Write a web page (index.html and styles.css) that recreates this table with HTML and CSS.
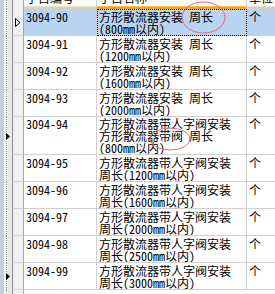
FILE: index.html
```html
<!DOCTYPE html>
<html>
<head>
<meta charset="utf-8">
<link rel="stylesheet" href="styles.css">
</head>
<body>
<div class="grid">
  <div class="row head">
    <div class="strip"></div>
    <div class="rh"></div>
    <div class="c c1 hd"><span class="ht">子目编号</span></div>
    <div class="c c2 hd hot"><span class="ht">子目名称</span></div>
    <div class="c c3 hd"><span class="ht">单位</span></div>
  </div>
  <div class="row sel">
    <div class="strip"></div>
    <div class="rh"><svg class="cur" width="6" height="9" viewBox="0 0 6 9"><polygon points="0.5,0.5 5,4.5 0.5,8.5" fill="none" stroke="#000" stroke-width="1"/></svg></div>
    <div class="c c1">3094-90</div>
    <div class="c c2 focus">方形散流器安装 周长<br>(800mm以内)</div>
    <div class="c c3">个</div>
  </div>
  <div class="row">
    <div class="strip"></div>
    <div class="rh"></div>
    <div class="c c1">3094-91</div>
    <div class="c c2">方形散流器安装 周长<br>(1200mm以内)</div>
    <div class="c c3">个</div>
  </div>
  <div class="row">
    <div class="strip"></div>
    <div class="rh"></div>
    <div class="c c1">3094-92</div>
    <div class="c c2">方形散流器安装 周长<br>(1600mm以内)</div>
    <div class="c c3">个</div>
  </div>
  <div class="row">
    <div class="strip"></div>
    <div class="rh"></div>
    <div class="c c1">3094-93</div>
    <div class="c c2">方形散流器安装 周长<br>(2000mm以内)</div>
    <div class="c c3">个</div>
  </div>
  <div class="row tall">
    <div class="strip"><svg class="arr" width="4" height="7" viewBox="0 0 4 7"><polygon points="0,0 4,3.5 0,7" fill="#000"/></svg></div>
    <div class="rh"></div>
    <div class="c c1">3094-94</div>
    <div class="c c2">方形散流器带人字阀安装<br>方形散流器带阀 周长<br>(800mm以内)</div>
    <div class="c c3">个</div>
  </div>
  <div class="row">
    <div class="strip"></div>
    <div class="rh"></div>
    <div class="c c1">3094-95</div>
    <div class="c c2">方形散流器带人字阀安装<br>周长(1200mm以内)</div>
    <div class="c c3">个</div>
  </div>
  <div class="row">
    <div class="strip"></div>
    <div class="rh"></div>
    <div class="c c1">3094-96</div>
    <div class="c c2">方形散流器带人字阀安装<br>周长(1600mm以内)</div>
    <div class="c c3">个</div>
  </div>
  <div class="row">
    <div class="strip"></div>
    <div class="rh"></div>
    <div class="c c1">3094-97</div>
    <div class="c c2">方形散流器带人字阀安装<br>周长(2000mm以内)</div>
    <div class="c c3">个</div>
  </div>
  <div class="row">
    <div class="strip"></div>
    <div class="rh"></div>
    <div class="c c1">3094-98</div>
    <div class="c c2">方形散流器带人字阀安装<br>周长(2500mm以内)</div>
    <div class="c c3">个</div>
  </div>
  <div class="row">
    <div class="strip"><svg class="arr" width="4" height="7" viewBox="0 0 4 7"><polygon points="0,0 4,3.5 0,7" fill="#000"/></svg></div>
    <div class="rh"></div>
    <div class="c c1">3094-99</div>
    <div class="c c2">方形散流器带人字阀安装<br>周长(3000mm以内)</div>
    <div class="c c3">个</div>
  </div>
  <div class="row filler">
    <div class="strip"></div>
    <div class="rh"></div>
  </div>
</div>
<svg class="marks" width="275" height="294" viewBox="0 0 275 294">
  <ellipse cx="203.5" cy="17.5" rx="21.5" ry="15.5" fill="none" stroke="#D9707E" stroke-width="1"/>
  <ellipse cx="170" cy="139" rx="20" ry="11" fill="none" stroke="#D9707E" stroke-width="1"/>
</svg>
</body>
</html>
```
FILE: styles.css
```css
html, body {
  margin: 0;
  padding: 0;
  background: #ffffff;
  overflow: hidden;
}
body {
  position: relative;
  width: 275px;
  height: 294px;
  font-family: "Noto Sans Mono CJK SC", "Noto Sans CJK SC", sans-serif;
  font-size: 12px;
  line-height: 12px;
  color: #000;
}
.grid {
  display: flex;
  flex-direction: column;
  width: 275px;
  height: 294px;
  overflow: hidden;
}
.row {
  display: grid;
  grid-template-columns: 12px 12px 73px 150px 28px;
  height: 27px;
  flex: none;
}
.row.tall {
  height: 38px;
}
.row.head {
  height: 9px;
}
.row.filler {
  height: 4px;
}
.strip {
  display: flex;
  align-items: center;
  padding-left: 6px;
  box-sizing: border-box;
  background:
    repeating-linear-gradient(to bottom, #8a8a8a 0 1px, transparent 1px 2px) 6px 0 / 1px 100% no-repeat,
    linear-gradient(to right, #C6CCD8 0 4px, #F4F4F4 4px 6px, #F4F4F4 6px 8px, #E9E9E9 8px 12px);
}
.arr {
  display: block;
}
.rh {
  box-sizing: border-box;
  background: #F0F0F0;
  border-left: 1px solid #8C8C8C;
  border-right: 1px solid #A8A8A8;
  border-bottom: 1px solid #D4D4D4;
  display: flex;
  align-items: center;
  justify-content: center;
}
.head .rh, .filler .rh {
  border-bottom: none;
}
.cur {
  display: block;
}
.c {
  box-sizing: border-box;
  border-right: 1px solid #D0D0D0;
  border-bottom: 1px solid #D0D0D0;
  padding: 2px 0 0 2px;
  white-space: nowrap;
  overflow: hidden;
}
.c3 {
  border-right: none;
}
.tall .c {
  padding-top: 1px;
}
.hd {
  padding: 0 0 0 2px;
  border-bottom: none;
  background: linear-gradient(to bottom, #FAFAF7 0 6px, #E4E1D4 6px 7px, #D6D2C3 7px 9px);
}
.hd.hot {
  background: linear-gradient(to bottom, #FAFAF7 0 6px, #F9C24A 6px 7px, #EFA31A 7px 9px);
}
.ht {
  display: block;
  margin-top: -8px;
}
.sel .c {
  background: #B8D4F0;
}
.focus {
  outline: 1px dotted #000;
  outline-offset: -1px;
}
.marks {
  position: absolute;
  left: 0;
  top: 0;
  pointer-events: none;
}
```
